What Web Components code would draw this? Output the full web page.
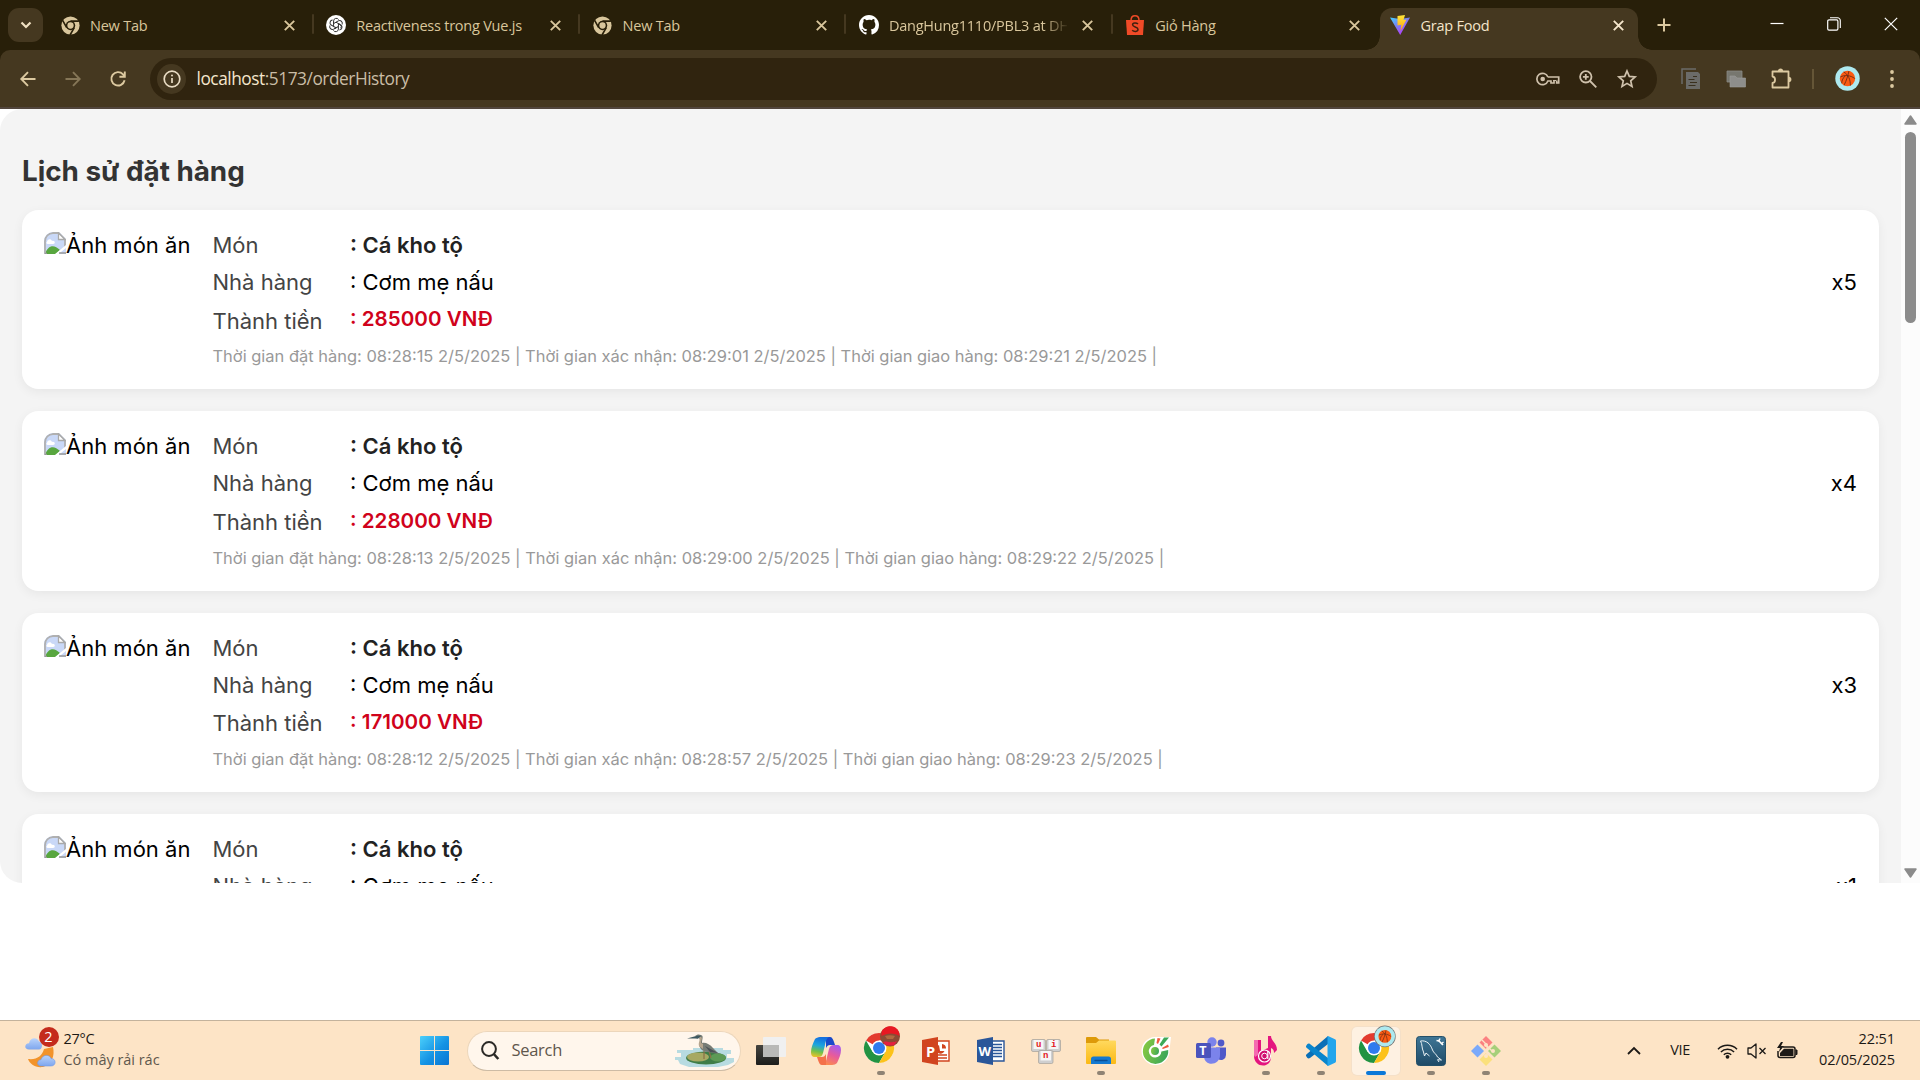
<!DOCTYPE html>
<html lang="vi">
<head>
<meta charset="utf-8">
<title>Grap Food</title>
<style>
html,body{margin:0;padding:0;width:1920px;height:1080px;overflow:hidden;background:#fff}
</style>
</head>
<body>
<desktop-screen></desktop-screen>
<script>
const UI = '"Open Sans","Noto Sans",sans-serif';
const define = (name, html, setup) => {
  const tpl = document.createElement('template');
  tpl.innerHTML = html;
  customElements.define(name, class extends HTMLElement {
    connectedCallback() {
      if (this.shadowRoot) return;
      this.attachShadow({mode: 'open'}).appendChild(tpl.content.cloneNode(true));
      if (setup) setup(this, this.shadowRoot);
    }
  });
};

const chromeColor = `<circle cx="15" cy="15" r="15" fill="#fff"/>
<path d="M15 15 2 7.5A15 15 0 0 1 28 7.5H15Z" fill="#e33b2e"/>
<path d="M2 7.5A15 15 0 0 0 15 30l6.5-11.2L8.5 18.8Z" fill="#229342"/>
<path d="M28 7.5A15 15 0 0 1 15 30l6.5-11.2 0-11.3Z" fill="#fcc21b"/>
<circle cx="15" cy="15" r="7.5" fill="#fff"/><circle cx="15" cy="15" r="6" fill="#2f7bee"/>`;
const ball = `<circle cx="13" cy="13" r="12.7" fill="#aee9ef"/><circle cx="13" cy="13" r="8" fill="#fb5a12"/>
<path d="M14.500 5.200C13.500 10 12 15 9.400 20M5.400 11.500C10 9 16 9.500 20.500 13M9 6.200C14 9 16 14 16 20.300M7 18C7 15 8.500 12 11 10" fill="none" stroke="#6b2c12" stroke-width=".9"/>`;

/* name: [width, height, viewBox, markup] */
const ICONS = {
  down: [12,8,'0 0 12 8','<path d="M1.500 1.500 6 6l4.500-4.500" fill="none" stroke="#f0e0c2" stroke-width="2.200"/>'],
  close: [11,11,'0 0 11 11','<path d="m.8.8 9.400 9.400m0-9.400L.8 10.200" stroke="currentColor" stroke-width="1.900"/>'],
  chrome: [19,19,'0 0 20 20','<circle cx="10" cy="10" r="9.600" fill="#d9c69c"/><path d="M10 5.400h8.800M6 12.300 1.700 4.600M14 12.300 9.500 20" stroke="#281f09" stroke-width="1.700"/><circle cx="10" cy="10" r="5" fill="#281f09"/><circle cx="10" cy="10" r="3.300" fill="#d9c69c"/>'],
  gpt: [20,20,'0 0 20 20','<circle cx="10" cy="10" r="10" fill="#fff"/><g fill="none" stroke="#333" stroke-width="1"><path d="M7.600 8.500V5.900a2.700 2.700 0 0 1 5-1.300M7.600 8.600 10 7.200l4 2.300a2.700 2.700 0 0 1 .8 3.800"/><path transform="rotate(60 10 10)" d="M7.600 8.500V5.900a2.700 2.700 0 0 1 5-1.300"/><path transform="rotate(120 10 10)" d="M7.600 8.500V5.900a2.700 2.700 0 0 1 5-1.300M7.600 8.600 10 7.200l4 2.300"/><path transform="rotate(180 10 10)" d="M7.600 8.500V5.900a2.700 2.700 0 0 1 5-1.300"/><path transform="rotate(240 10 10)" d="M7.600 8.500V5.900a2.700 2.700 0 0 1 5-1.300M7.600 8.600 10 7.200l4 2.300"/><path transform="rotate(300 10 10)" d="M7.600 8.500V5.900a2.700 2.700 0 0 1 5-1.300"/></g>'],
  github: [20,20,'0 0 16 16','<path fill="#fff" d="M8 0C3.580 0 0 3.580 0 8c0 3.540 2.290 6.530 5.470 7.590.4.070.55-.17.55-.38 0-.19-.01-.82-.01-1.490-2.010.37-2.530-.49-2.690-.94-.09-.23-.48-.94-.82-1.130-.28-.15-.68-.52-.01-.53.63-.01 1.080.58 1.230.82.72 1.210 1.870.87 2.330.66.07-.52.28-.87.51-1.070-1.780-.2-3.640-.89-3.640-3.950 0-.87.31-1.590.82-2.150-.08-.2-.36-1.020.08-2.120 0 0 .67-.21 2.200.82A7.600 7.600 0 0 1 8 3.860c.68 0 1.360.09 2 .27 1.530-1.040 2.200-.82 2.200-.82.44 1.100.16 1.920.08 2.120.51.56.82 1.270.82 2.150 0 3.070-1.870 3.750-3.650 3.950.29.25.54.73.54 1.480 0 1.070-.01 1.930-.01 2.200 0 .21.15.46.55.38A8 8 0 0 0 16 8c0-4.420-3.580-8-8-8Z"/>'],
  shopee: [18,20,'0 0 18 20','<path d="M0 5h18l-1 15H1Z" fill="#f04a27"/><path d="M5 5.500C5 -.8 13 -.8 13 5.500" fill="none" stroke="#f04a27" stroke-width="1.500"/><path d="M12 9c-1.500-1.600-5.400-1.500-5.400.8 0 2.600 5.400 1.700 5.400 4.500 0 2.600-4 2.700-5.800.9" fill="none" stroke="#40200e" stroke-width="1.500"/>'],
  vite: [20,20,'0 0 20 20','<defs><linearGradient id="v" x1="0" y1="0" x2=".7" y2="1"><stop offset="0" stop-color="#41d1ff"/><stop offset=".5" stop-color="#7d7cf2"/><stop offset="1" stop-color="#bd34fe"/></linearGradient><linearGradient id="w" x1="0" y1="0" x2="0" y2="1"><stop offset="0" stop-color="#ffe83a"/><stop offset="1" stop-color="#ff9f0f"/></linearGradient></defs><path d="M0 2.400 10 4l10-1.600L10.200 20Z" fill="url(#v)"/><path d="m7.500.9 7.500-1-1.500 5 3-.5-6 11.600.8-6.200-3.800.6Z" fill="url(#w)"/>'],
  plus: [14,14,'0 0 14 14','<path d="M7 .5v13M.5 7h13" stroke="#dcc9a0" stroke-width="2"/>'],
  min: [14,14,'0 0 14 14','<path d="M.5 6.500h13" stroke="#fff" stroke-width="1.200"/>'],
  restore: [14,14,'0 0 14 14','<rect x=".7" y="2.900" width="10.200" height="10.200" rx="1.300" fill="none" stroke="#fff" stroke-width="1.200"/><path d="M3 .8h7.500a2.800 2.800 0 0 1 2.800 2.800V11" fill="none" stroke="#fff" stroke-width="1.100"/>'],
  winclose: [14,14,'0 0 14 14','<path d="m.8.8 12.400 12.400m0-12.400L.8 13.200" stroke="#fff" stroke-width="1.200"/>'],
  back: [16,16,'0 0 16 16','<path d="M15.500 8H1.500M8 1.200 1.300 8 8 14.800" fill="none" stroke="#dcc9a0" stroke-width="1.900"/>'],
  forward: [16,16,'0 0 16 16','<path d="M.5 8h14M8 1.200 14.700 8 8 14.800" fill="none" stroke="#857657" stroke-width="1.900"/>'],
  reload: [16,16,'0 0 16 16','<path d="M14.600 9.300A6.700 6.700 0 1 1 13 3.300l1.500 1.700M14.800.4v5.400H9.400" fill="none" stroke="#dcc9a0" stroke-width="1.900"/>'],
  info: [18,18,'0 0 18 18','<circle cx="9" cy="9" r="7.800" fill="none" stroke="#e9dcc4" stroke-width="1.700"/><path d="M9 8v5" stroke="#e9dcc4" stroke-width="1.700"/><circle cx="9" cy="5.500" r="1" fill="#e9dcc4"/>'],
  key: [24,14,'0 0 24 14','<path d="M11.900 5h10.800v6h-2V8.500M18 8v3h-3V9h-3.100a5.700 5.700 0 1 1 0-4" fill="none" stroke="#cfc1ac" stroke-width="1.700"/><circle cx="6.700" cy="7" r="2.300" fill="#cfc1ac"/><path d="M17 8.500h3" stroke="#cfc1ac"/>'],
  zoom: [18,18,'0 0 18 18','<circle cx="6.800" cy="6.800" r="5.700" fill="none" stroke="#cfc1ac" stroke-width="1.800"/><path d="m11 11 6.300 6.300M6.800 3.900v5.800M3.900 6.800h5.800" stroke="#cfc1ac" stroke-width="1.800"/>'],
  star: [20,19,'0 0 20 19','<path d="m10 2 2.300 5.400 5.800.5-4.400 3.900 1.300 5.700-5-3.100-5 3.100 1.300-5.700L1.900 7.900l5.800-.5Z" fill="none" stroke="#cfc1ac" stroke-width="1.700"/>'],
  doc: [20,21,'0 0 20 21','<path d="M1 16V1h14M1 1v15" fill="none" stroke="#6b6b68" stroke-width="1.500"/><path d="M5 4h12l2 2v15H5Z" fill="#6b6b68"/><path d="M12 8.500h4M7.500 11.500h6M9 14.500h7M7.500 17.500h7" stroke="#3a301e" stroke-width="1.200"/>'],
  folders: [20,18,'0 0 20 18','<path d="M1 1h15v11H1Z" fill="#77776f" stroke="#8a8a85" stroke-width=".8"/><path d="M4 6h5l2 2h8.500v9H4Z" fill="#8e8e8b" stroke="#a0a09c" stroke-width=".6"/>'],
  puzzle: [21,21,'0 0 21 21','<path d="M1.500 3.500h16v16h-16v-4.500c3.400-.4 3.400-6.100 0-6.500Z" fill="none" stroke="#dcc9a0" stroke-width="1.800" stroke-linejoin="round"/><path d="M6.800 3.500a2.700 2.900 0 0 1 5.400 0ZM17.500 8.800a2.900 2.700 0 0 1 0 5.400Z" fill="#dcc9a0"/>'],
  ball: [25,25,'0 0 26 26',ball],
  dots: [4,18,'0 0 4 18','<g fill="#dcc9a0"><circle cx="2" cy="2" r="1.900"/><circle cx="2" cy="9" r="1.900"/><circle cx="2" cy="16" r="1.900"/></g>'],
  broken: [22,22,'0 0 22 22','<defs><clipPath id="c"><path d="M0 22V9a9 9 0 0 1 9-9h6l7 7v15Z"/></clipPath></defs><g clip-path="url(#c)"><path d="M0 0h22v22H0Z" fill="#c9d8f7"/><path d="M3 10c0-3 4-4 5-1 3-1 4 3 1 3H4c-2 0-2-2-1-2Z" fill="#fff"/><path d="M1 22c3-9 9-10 15-4l-4 4Z" fill="#58a63f"/><path d="M1 22V9a8 8 0 0 1 8-8h6l6 6v9" fill="none" stroke="#b0b0b0" stroke-width="1.800"/><path d="M14.500 1v6.500H21Z" fill="#fff" stroke="#a9a9a9" stroke-width="1.300"/><path d="M22 13 11 22h3.500L22 16Z" fill="#fff"/><path d="M1 21.500h2M15 21h7" stroke="#999" stroke-width="1.500"/></g>'],
  up: [13,10,'0 0 13 10','<path d="M6.500 1 12 9H1Z" fill="#8b8b8b" stroke="#8b8b8b" stroke-width="1.500" stroke-linejoin="round"/>'],
  dn: [13,10,'0 0 13 10','<path d="M6.500 9 12 1H1Z" fill="#8b8b8b" stroke="#8b8b8b" stroke-width="1.500" stroke-linejoin="round"/>'],
  weather: [32,32,'0 0 32 32','<defs><linearGradient id="cl" x1="0" y1="0" x2="0" y2="1"><stop offset="0" stop-color="#b9d3fb"/><stop offset="1" stop-color="#7ea6ee"/></linearGradient></defs><path d="M4 14.500c-5 0-5-6 0-6.300C5 2.500 12 1.500 14 6.500c4 0 4 8 0 8Z" fill="url(#cl)"/><path d="M3 24c9 1 14-3 16-10l9-2c2 9-1 17-10 20C10 33 5 29 3 24Z" fill="#f2932a"/><path d="M16 31c-4.500 0-4.500-6 0-6.300 1-5 8.500-6 10-1.200 5.500 0 5.500 7.500 0 7.500Z" fill="url(#cl)" stroke="#6f9be9" stroke-width=".6"/>'],
  win: [29,29,'0 0 29 29','<defs><linearGradient id="n" gradientUnits="userSpaceOnUse" x1="0" y1="0" x2="29" y2="29"><stop offset="0" stop-color="#4cd0fb"/><stop offset=".55" stop-color="#1593e4"/><stop offset="1" stop-color="#0a74d2"/></linearGradient></defs><path fill="url(#n)" d="M1 0h13v14H0V1a1 1 0 0 1 1-1Zm14 0h13a1 1 0 0 1 1 1v13H15ZM0 15h14v14H1a1 1 0 0 1-1-1Zm15 0h14v13a1 1 0 0 1-1 1H15Z"/>'],
  search: [18,19,'0 0 18 19','<circle cx="8" cy="8" r="6.900" fill="none" stroke="#2b2926" stroke-width="2"/><path d="m12.800 13 4.500 5" stroke="#2b2926" stroke-width="2.600"/>'],
  heron: [60,32,'0 0 60 32','<path d="M3 25H0v-3h6v-4h-4v-3h16v-2h30v2h8v4h-4v4h7v4l-6 3-10 2H14L5 29Z" fill="#a5d5df" opacity=".8"/><ellipse cx="31" cy="23" rx="20" ry="6.500" fill="#3f7d47"/><ellipse cx="23" cy="22" rx="11" ry="4.500" fill="#a7a963"/><ellipse cx="43" cy="22.500" rx="8" ry="4" fill="#5d9a55"/><path d="M29 16v8M34 16l2 7" stroke="#8c7146" stroke-width="1.200"/><path d="M23 2c3 2 2 5 1 8 1 4 4 7 9 7l11 2-6-6c-3-4-8-6-11-5 0-4 2-7-1-8-2-1-4-.8-6 1Z" fill="#777c75"/><path d="M24 2c2 3-1 5 0 9l4 3V9l-2-1c0-3 2-5 0-6Z" fill="#b5a58e"/><path d="M12 3.500 22 .8h4l-3 3-3-.4Z" fill="#3e5961"/><path d="m30 11 13 7-8-1Z" fill="#4b5256"/>'],
  taskview: [30,28,'0 0 30 28','<defs><linearGradient id="t" x1="0" y1="0" x2="0" y2="1"><stop offset="0" stop-color="#45443f"/><stop offset="1" stop-color="#1d1d1b"/></linearGradient></defs><rect y="8" width="23" height="20" rx="1" fill="url(#t)"/><rect x="7" width="23" height="20" rx="1" fill="#f0f0f0"/><path d="M7 8h16v12H8a1 1 0 0 1-1-1Z" fill="#b9b9b7"/>'],
  copilot: [30,28,'0 0 30 28','<defs><linearGradient id="p1" x1=".4" y1="0" x2=".2" y2="1"><stop offset="0" stop-color="#1470e0"/><stop offset=".4" stop-color="#1da6dd"/><stop offset=".7" stop-color="#6fc04c"/><stop offset="1" stop-color="#f2c325"/></linearGradient><linearGradient id="p2" x1=".7" y1="0" x2=".3" y2="1"><stop offset="0" stop-color="#a45cf0"/><stop offset=".5" stop-color="#e85b9b"/><stop offset="1" stop-color="#fb8b4f"/></linearGradient></defs><path d="M15 0h4c2 0 3 2 4 5l1 3h-5c-2 0-3 1-4 3Z" fill="#1a49c9"/><path d="M9 0h9c-2 1-3 3-4 8l-2 8c-1 3-2 4-5 4H4c-3 0-4-2-4-5 0-4 2-9 4-13 1-1 3-2 5-2Z" fill="url(#p1)"/><path d="M21 28h-9c2-1 3-3 4-8l2-8c1-3 2-4 5-4h3c3 0 4 2 4 5 0 4-2 9-4 13-1 1-3 2-5 2Z" fill="url(#p2)"/><path d="M15 28h-4c-2 0-3-2-4-5l-1-3h5c2 0 3-1 4-3Z" fill="#f4714a"/>'],
  chromered: [38,38,'0 0 38 38','<g transform="translate(1 7)">'+chromeColor+'</g><circle cx="27" cy="10.500" r="10" fill="#8c4b35"/><path d="M18.500 6c3-7 14-8 17.500 0l.5 4c-5-3.500-12-3.500-18 0Z" fill="#e81822"/><path d="M20 16c3-2 8 2 14-1l-3 4.500h-8Z" fill="#e5203f"/><path d="M22 10c3-1 7-1 10 0l-2 3h-6Z" fill="#b06a40"/>'],
  chromeball: [38,38,'0 0 38 38','<g transform="translate(1 7)">'+chromeColor+'</g><g transform="translate(16.500 0) scale(.8)"><circle cx="13" cy="13" r="13.500" fill="#777"/>'+ball+'</g>'],
  ppt: [28,28,'0 0 28 28','<path d="M14 4h13v20H14Z" fill="#fff" stroke="#d1441f" stroke-width="1.400"/><path d="M17 8a4.500 4.500 0 1 0 5.500 6H18Z" fill="#d1441f"/><path d="M20 7a4.500 4.500 0 0 1 4 4.500h-4Z" fill="#d1441f"/><path d="M16 18h9M16 21h9" stroke="#d1441f" stroke-width="1.300"/><path d="m0 3 16-3v28L0 25Z" fill="#d1441f"/><text x="4" y="19.500" font-family="Open Sans" font-weight="700" font-size="14.500" fill="#fff">P</text>'],
  word: [28,28,'0 0 28 28','<path d="M14 4h13v20H14Z" fill="#fff" stroke="#2a5699" stroke-width="1.400"/><path d="M16 7.500h9M16 10.500h9M16 13.500h9M16 16.500h9M16 19.500h9" stroke="#2a5699" stroke-width="1.500"/><path d="m0 3 16-3v28L0 25Z" fill="#2a5699"/><text x="1.500" y="19" font-family="Open Sans" font-weight="700" font-size="13" fill="#fff">W</text>'],
  unikey: [30,26,'0 0 30 26','<g stroke="#a5a09a" stroke-width=".7" fill="#cfcfcf"><rect x=".5" y="1.500" width="14" height="12" rx="1.500"/><rect x="15.500" y="1.500" width="14" height="12" rx="1.500"/><rect x="7.500" y="12.500" width="14.500" height="13" rx="1.500"/></g><g fill="#f6f6f6"><rect x="2.500" y="2" width="10" height="9"/><rect x="17.500" y="2" width="10" height="9"/><rect x="9.500" y="13" width="10.500" height="9.500"/></g><g font-family="Liberation Mono" font-weight="700" font-size="9" fill="#e3171d"><text x="5" y="9">u</text><text x="20" y="9">i</text><text x="12" y="20">n</text></g>'],
  folder: [30,27,'0 0 30 27','<defs><linearGradient id="f" x1="0" y1="0" x2="0" y2="1"><stop offset="0" stop-color="#ffd95e"/><stop offset="1" stop-color="#fbb914"/></linearGradient></defs><path d="M0 1a1 1 0 0 1 1-1h9l3 2.500h10V8H0Z" fill="#dd9a09"/><path d="M0 6h10l3-2.500h16a1 1 0 0 1 1 1V26a1 1 0 0 1-1 1H1a1 1 0 0 1-1-1Z" fill="url(#f)"/><path d="M5 27v-5a2.500 2.500 0 0 1 2.500-2.500h15A2.500 2.500 0 0 1 25 22v5Z" fill="#1479d0"/><path d="M9 23.500h12" stroke="#0a4f96" stroke-width="1.300" stroke-linecap="round"/>'],
  coccoc: [30,30,'0 0 30 30','<defs><linearGradient id="k" x1="0" y1="0" x2="1" y2=".3"><stop offset="0" stop-color="#8dcb3f"/><stop offset="1" stop-color="#3fa958"/></linearGradient></defs><path d="M14 1A14 14 0 1 0 28.500 14L30 1Z" fill="#fff"/><path d="M14 2.500A12.700 12.700 0 1 0 27.200 14l-6.800 1.500A6.300 6.300 0 1 1 13 9Z" fill="url(#k)"/><circle cx="14" cy="15" r="4" fill="url(#k)"/><path d="m15.500 7 1-5 3 .5-2.500 5.500Z" fill="#f05a3e"/><path d="m18.500 8.500 4.500-7h5l-7.500 9Z" fill="#3fa958"/><path d="m21 12 6-3.500.8 2.500-6 2Z" fill="#f05a3e"/>'],
  teams: [30,28,'0 0 30 28','<circle cx="16" cy="5" r="4.700" fill="#7b83eb"/><circle cx="25" cy="6" r="3.400" fill="#5059c9"/><path d="M20 10.500h10V18a5 5 0 0 1-8 4Z" fill="#5059c9"/><path d="M8 10.500h16V18c0 11-16 12-16 1Z" fill="#7b83eb"/><rect y="6" width="15" height="15" rx="1.500" fill="#4b53bc"/><text x="3.200" y="18" font-family="Open Sans" font-weight="700" font-size="12.500" fill="#fff">T</text>'],
  ultra: [24,30,'0 0 24 30','<path d="M0 4h7v11l7-3V0h3c0 5 6 7 6 14l-3 3c0-3-1-4-3-5v9c0 12-17 11-17-1Z" fill="#e4157f"/><path d="M0 4h4v15l-3 2-1-2Z" fill="#f46bb0"/><circle cx="10.500" cy="20" r="6" fill="#d10f70" stroke="#fff" stroke-width="1.200"/><circle cx="10.500" cy="20" r="2.800" fill="none" stroke="#fff"/><path d="M13.800 15v8" stroke="#fff" stroke-width="1.200"/>'],
  vscode: [30,30,'0 0 30 30','<path d="M22 0v8L4 22c-1 .7-2 .6-2.800-.2L.4 20.600c-.6-.7-.5-1.700.2-2.300Z" fill="#0a6fb7"/><path d="M22 30v-8L4 8c-1-.7-2-.6-2.800.2L.4 9.400c-.6.7-.5 1.700.2 2.300Z" fill="#0a85cc"/><path d="M22 0l7 3.300c.6.3 1 1 1 1.700v20c0 .7-.4 1.400-1 1.700L22 30c-.5-.3-.5-1-.5-1.500v-27C21.500 1 21.500.3 22 0Z" fill="#23a5ec"/>'],
  mysql: [30,30,'0 0 30 30','<defs><linearGradient id="m" x1="0" y1="0" x2="0" y2="1"><stop offset="0" stop-color="#3f7696"/><stop offset="1" stop-color="#1f4a66"/></linearGradient></defs><rect x=".5" y=".5" width="29" height="29" rx="3" fill="url(#m)" stroke="#245069"/><path d="M4.500 5c6-1 10 3 12 9 1 3 4 4 5 7l4 3-4-.3 1.500 2.300M4.500 5c2 3 1 7 3 11l1 4 1.500-3 3.500 3" fill="none" stroke="#e8f0f4" stroke-width="1"/><path d="m22 4 5 5" stroke="#fff" stroke-width="1.600"/><path d="M20.500 4.500 23 5l1-2.500M25 8l2.500-2" fill="none" stroke="#fff" stroke-width="1.300"/>'],
  git: [30,30,'0 0 30 30','<path d="m15 0 6.500 6.500-6.500 6.500L8.500 6.500Z" fill="#fb8181"/><path d="m6.500 8.500 6.500 6.500-6.500 6.500L0 15Z" fill="#7aa9fa"/><path d="m23.500 8.500 6.500 6.500-6.500 6.500L17 15Z" fill="#a6cf7a"/><path d="m15 17 6.500 6.500L15 30l-6.500-6.500Z" fill="#fbe07c"/><path d="m11 4 5 5v10M16 10l5 5" fill="none" stroke="#fde4c6" stroke-width="1.300"/><circle cx="15" cy="9" r="2" fill="#fde4c6"/><circle cx="15" cy="20" r="2" fill="#fde4c6"/><circle cx="22" cy="15" r="2" fill="#fde4c6"/>'],
  chev: [14,9,'0 0 14 9','<path d="M1 8 7 2l6 6" fill="none" stroke="#1c1916" stroke-width="1.800"/>'],
  wifi: [21,16,'0 0 21 16','<g fill="none" stroke="#1c1916" stroke-width="1.500"><path d="M1 6.200a13.400 13.400 0 0 1 19 0M3.900 9a9.400 9.400 0 0 1 13.200 0M6.800 11.800a5.300 5.300 0 0 1 7.400 0"/></g><circle cx="10.500" cy="13.800" r="1.900" fill="#1c1916"/>'],
  mute: [20,16,'0 0 20 16','<path d="M1 5h3l5-4v14l-5-4H1Z" fill="none" stroke="#1c1916" stroke-width="1.300" stroke-linejoin="round"/><path d="m12.500 5 6 6m0-6-6 6" stroke="#1c1916" stroke-width="1.300"/>'],
  battery: [21,17,'0 0 21 17','<path d="M6 5h10a2 2 0 0 1 2 2v6.500a2 2 0 0 1-2 2H3a2 2 0 0 1-2-2V9" fill="none" stroke="#1c1916" stroke-width="1.500"/><path d="M18.500 8H20v4.500h-1.500" fill="#1c1916" stroke="#1c1916"/><path d="M7 6.800h9.500V14H3v-3Z" fill="#1c1916"/><path d="M4 0 0 6h3L2 10l5-6H4L6 0Z" fill="#1c1916"/>']
};
define('ui-icon', '<style>:host{display:block;flex:none;line-height:0}svg{display:block;overflow:visible}</style>', (el, root) => {
  const [w, h, vb, body] = ICONS[el.getAttribute('name')];
  root.innerHTML += `<svg width="${w}" height="${h}" viewBox="${vb}">${body}</svg>`;
});

define('browser-tab', `<style>
:host{display:flex;box-sizing:border-box;width:266.300px;height:42px;align-items:center;padding:0 18.500px 8px 13px;color:#d9c69c;flex:none;position:relative;font:14.500px/20px ${UI};letter-spacing:-.23px}
.ico{width:20px;display:flex;justify-content:center;margin-right:10px;flex:none}
.t{flex:1;white-space:nowrap;overflow:hidden;margin-right:18px;padding-top:2px}
:host([fade]) .t{flex:none;width:178px;margin-right:15.500px;-webkit-mask-image:linear-gradient(90deg,#000 154px,transparent 180px)}
.sep{position:absolute;right:-.5px;top:6px;width:2px;height:20px;background:#453820;border-radius:1px}
:host([last]) .sep,:host([active]) .sep{display:none}
:host([active]){color:#f5e6cc;margin-left:2px;width:258px;background:#453820;border-radius:12px 12px 0 0;padding:0 14px 8px 10px}
:host([active])::before,:host([active])::after{content:"";position:absolute;bottom:0;width:14px;height:14px}
:host([active])::before{left:-14px;background:radial-gradient(circle at 0 0,transparent 13.500px,#453820 14px)}
:host([active])::after{right:-14px;background:radial-gradient(circle at 100% 0,transparent 13.500px,#453820 14px)}
</style><div class="ico"><slot name="icon"></slot></div><div class="t"><slot></slot></div><ui-icon name="close"></ui-icon><div class="sep"></div>`);

define('tab-strip', `<style>
:host{display:flex;height:50px;background:#281f09;box-sizing:border-box;padding-top:8px}
.menu{width:35px;height:34px;border-radius:11px;background:#453820;display:flex;align-items:center;justify-content:center;margin:0 4px 0 8px}
.win{margin-left:auto;display:flex;gap:43px;padding:9px 22px 0 0}
.plus{padding:10px 0 0 18.500px}
</style><div class="menu"><ui-icon name="down"></ui-icon></div>
<browser-tab><ui-icon slot="icon" name="chrome"></ui-icon>New Tab</browser-tab>
<browser-tab><ui-icon slot="icon" name="gpt"></ui-icon>Reactiveness trong Vue.js</browser-tab>
<browser-tab><ui-icon slot="icon" name="chrome"></ui-icon>New Tab</browser-tab>
<browser-tab fade><ui-icon slot="icon" name="github"></ui-icon>DangHung1110/PBL3 at DH</browser-tab>
<browser-tab last><ui-icon slot="icon" name="shopee"></ui-icon>Giỏ Hàng</browser-tab>
<browser-tab active><ui-icon slot="icon" name="vite"></ui-icon>Grap Food</browser-tab>
<div class="plus"><ui-icon name="plus"></ui-icon></div>
<div class="win"><ui-icon name="min"></ui-icon><ui-icon name="restore"></ui-icon><ui-icon name="winclose"></ui-icon></div>`);

define('tool-bar', `<style>
:host{display:block;background:#281f09}
.bar{display:flex;align-items:center;height:57px;border-bottom:2px solid #51453c;background:#453820;border-radius:10px 10px 0 0;padding:0 26px 0 20px}
.nav{display:flex;gap:29px;width:130px}
.omni{display:flex;align-items:center;box-sizing:border-box;width:1507px;height:42px;border-radius:21px;background:#30240f;padding:0 20px 0 7px}
.chip{width:29px;height:30px;border-radius:50%;background:#453820;display:flex;align-items:center;justify-content:center}
.url{margin-left:10.500px;font:17.300px/24px ${UI};color:#cabda6;letter-spacing:-.46px;padding-top:1px}
b{font-weight:400;color:#f5e6cc}
.acts{margin-left:auto;display:flex;align-items:center;gap:20px}
.ext{display:flex;align-items:center;margin-left:24px;flex:1}
.sep{width:2px;height:20px;background:#655637}
</style><div class="bar"><div class="nav"><ui-icon name="back"></ui-icon><ui-icon name="forward"></ui-icon><ui-icon name="reload"></ui-icon></div>
<div class="omni"><div class="chip"><ui-icon name="info"></ui-icon></div><div class="url"><b>localhost</b>:5173/orderHistory</div><div class="acts"><ui-icon name="key"></ui-icon><ui-icon name="zoom" style="margin-left:-1px"></ui-icon><ui-icon name="star"></ui-icon></div></div>
<div class="ext"><ui-icon name="doc"></ui-icon><ui-icon name="folders" style="margin-left:25px"></ui-icon><ui-icon name="puzzle" style="margin-left:25px"></ui-icon><div class="sep" style="margin:0 21px 0 20px"></div><ui-icon name="ball"></ui-icon><ui-icon name="dots" style="margin-left:auto"></ui-icon></div></div>`);

define('order-card', `<style>
:host{display:flex;box-sizing:border-box;height:179.300px;flex:none;background:#fff;border-radius:16.500px;padding:22px;box-shadow:0 3px 11px rgba(0,0,0,.06);font:22px/27px Inter,sans-serif;color:#000}
.pic{display:flex;width:147px;margin-right:21.500px;white-space:nowrap;flex:none}
.rows{flex:1}
.r{display:flex;height:27px;margin-bottom:10.200px;white-space:nowrap}
.r span:first-child{width:137.500px;color:#444}
.n{font-weight:600;color:#222}
.p{font-weight:600;color:#d0021b;font-size:20.600px;line-height:25px}
.third{margin-bottom:12px}
.third span:first-child{padding-top:1.500px}
.time{font-size:16.470px;line-height:22px;color:#999;white-space:nowrap}
.q{padding-top:37px}
</style><div class="pic"><ui-icon name="broken"></ui-icon><span>Ảnh món ăn</span></div>
<div class="rows"><div class="r"><span>Món</span><span class="n">: Cá kho tộ</span></div><div class="r"><span>Nhà hàng</span><span>: Cơm mẹ nấu</span></div><div class="r third"><span>Thành tiền</span><span class="p"></span></div><div class="time"></div></div><div class="q"></div>`, (el, root) => {
  const t = el.getAttribute('times').split(',');
  root.querySelector('.p').textContent = `: ${el.getAttribute('price')} VNĐ`;
  root.querySelector('.time').textContent = `Thời gian đặt hàng: ${t[0]} 2/5/2025 | Thời gian xác nhận: ${t[1]} 2/5/2025 | Thời gian giao hàng: ${t[2]} 2/5/2025 |`;
  root.querySelector('.q').textContent = 'x' + el.getAttribute('qty');
});

define('scroll-bar', `<style>
:host{display:flex;flex-direction:column;align-items:center;box-sizing:border-box;width:19px;background:#fcfcfc;padding:6px 0 5px}
.thumb{width:11px;height:191px;border-radius:6px;background:#8b8b8b;margin:7px 0 auto}
</style><ui-icon name="up"></ui-icon><div class="thumb"></div><ui-icon name="dn"></ui-icon>`);

define('order-page', `<style>
:host{display:flex;height:774px;overflow:hidden;background:#fff}
main{display:flex;flex-direction:column;box-sizing:border-box;width:1901px;height:774px;overflow:hidden;background:#f4f4f4;border-radius:22px 0 0 22px;padding:45px 22px 0;gap:22px}
h1{margin:0 0 -1px;flex:none;font:700 27.800px/35px Inter,sans-serif;color:#333;height:35px}
</style><main><h1>Lịch sử đặt hàng</h1>
<order-card price="285000" qty="5" times="08:28:15,08:29:01,08:29:21"></order-card>
<order-card price="228000" qty="4" times="08:28:13,08:29:00,08:29:22"></order-card>
<order-card price="171000" qty="3" times="08:28:12,08:28:57,08:29:23"></order-card>
<order-card price="57000" qty="1" times="08:28:10,08:28:55,08:29:24"></order-card>
</main><scroll-bar></scroll-bar>`);

define('task-item', `<style>
:host{display:flex;position:relative;width:55px;height:48px;align-items:center;justify-content:center;flex:none}
.tile{position:absolute;inset:0 3.500px;border-radius:5px;z-index:0}
:host([active]) .tile{background:#fef1e2;box-shadow:0 0 0 1px #f5e0c8}
ui-icon{position:relative}
:host([badge]) ui-icon{margin:-11px 0 0 3px}
.dot{position:absolute;left:50%;bottom:0;width:8px;height:4px;margin-left:-4px;border-radius:2px;background:#8f8374;display:none}
:host([run]) .dot{display:block}
:host([active]) .dot{width:20px;margin-left:-10px;background:#0b78d8}
</style><div class="tile"></div><div class="dot"></div>`, (el, root) => {
  const i = document.createElement('ui-icon');
  i.setAttribute('name', el.getAttribute('name'));
  root.querySelector('.tile').after(i);
});

define('task-bar', `<style>
:host{display:flex;align-items:center;box-sizing:border-box;height:60px;border-top:1px solid #c3b29c;background:#fde4c6;padding:0 25px 0 24.500px;font:14.500px/20.500px ${UI};color:#1c1916;letter-spacing:-.3px}
.wx{position:relative;width:39px;height:44px}
.wx ui-icon{padding-top:6px}
.badge{position:absolute;left:14px;top:-1.500px;width:20px;height:20px;border-radius:50%;background:#c42b1c;color:#fff;text-align:center;line-height:20px;letter-spacing:0}
.lbl{width:356px;padding-bottom:2px}
.lbl div:last-child{letter-spacing:-.03px}
.lbl div:last-child,.s{color:#5f574d}
.search{display:flex;align-items:center;box-sizing:border-box;width:274px;height:40px;border-radius:20px;background:#fff6ec;border:1px solid #ecd6bb;border-bottom-color:#cdbba4;margin:0 2.500px 0 18px;padding:0 5px 0 13px}
.s{margin-left:13px;font-size:16.500px;flex:1}
.tray{margin-left:auto;display:flex;align-items:center}
.clock{text-align:right;margin-left:20px;width:77px;letter-spacing:-.1px;white-space:nowrap;display:flex;flex-direction:column;align-items:flex-end;padding-bottom:2px}
</style><div class="wx"><ui-icon name="weather"></ui-icon><div class="badge">2</div></div>
<div class="lbl"><div>27°C</div><div>Có mây rải rác</div></div>
<ui-icon name="win"></ui-icon>
<div class="search"><ui-icon name="search"></ui-icon><span class="s">Search</span><ui-icon name="heron"></ui-icon></div>
<task-item name="taskview"></task-item><task-item name="copilot"></task-item><task-item name="chromered" badge run></task-item><task-item name="ppt"></task-item><task-item name="word"></task-item><task-item name="unikey"></task-item><task-item name="folder" run></task-item><task-item name="coccoc"></task-item><task-item name="teams"></task-item><task-item name="ultra" run></task-item><task-item name="vscode" run></task-item><task-item name="chromeball" badge run active></task-item><task-item name="mysql" run></task-item><task-item name="git" run></task-item>
<div class="tray"><ui-icon name="chev" style="margin-left:-1px"></ui-icon><span style="margin:0 27px 0 29px">VIE</span><ui-icon name="wifi"></ui-icon><ui-icon name="mute" style="margin:0 10px 0 9px"></ui-icon><ui-icon name="battery"></ui-icon><div class="clock"><div>22:51</div><div>02/05/2025</div></div></div>`);

define('desktop-screen', `<style>
:host{display:flex;flex-direction:column;width:1920px;height:1080px;background:#fff;overflow:hidden}
task-bar{margin-top:auto}
</style><tab-strip></tab-strip><tool-bar></tool-bar><order-page></order-page><task-bar></task-bar>`);
</script>
</body>
</html>
